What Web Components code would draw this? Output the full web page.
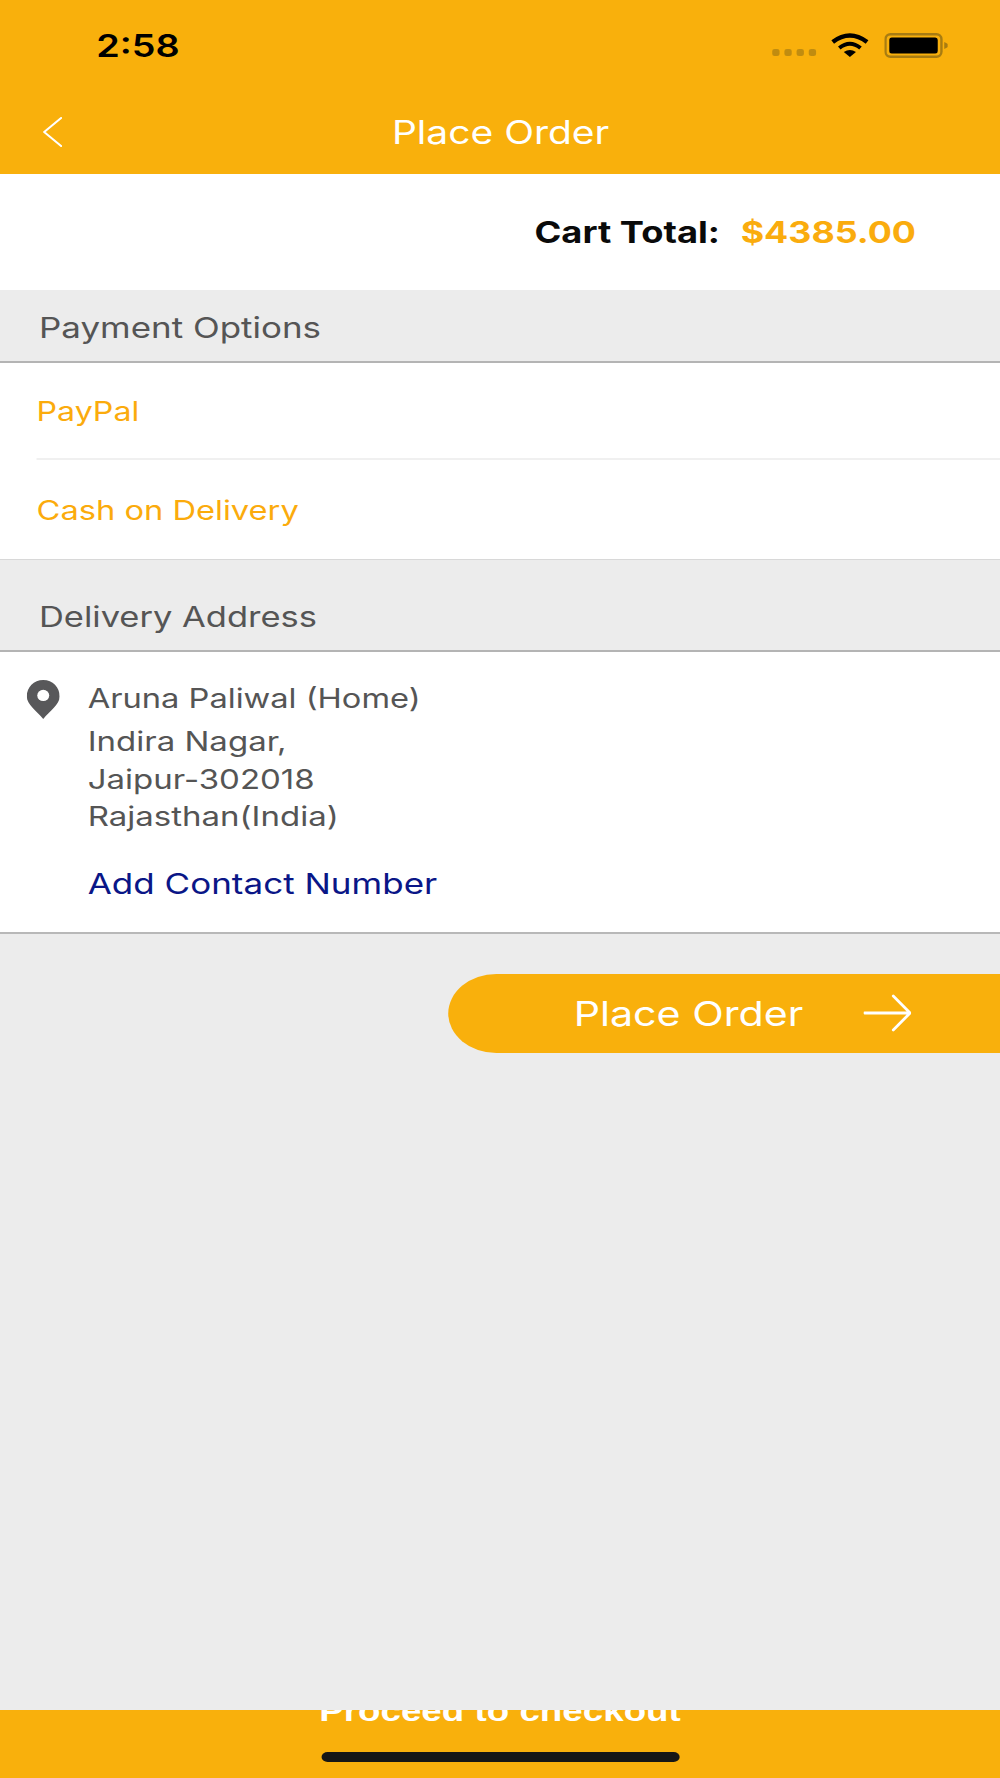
<!DOCTYPE html>
<html lang="en">
<head>
<meta charset="utf-8">
<title>Place Order</title>
<style>
    html, body { margin: 0; background: #ececec; overflow: hidden; }
</style>
</head>
<body>
<app-page>
    <app-header slot="header" title-text="Place Order"></app-header>
    <cart-total label="Cart Total:" amount="$4385.00"></cart-total>
    <section-heading>Payment Options</section-heading>
    <option-row>PayPal</option-row>
    <option-row last>Cash on Delivery</option-row>
    <section-heading second>Delivery Address</section-heading>
    <address-card>
        <span slot="name">Aruna Paliwal (Home)</span>
        <span>Indira Nagar,</span>
        <span>Jaipur-302018</span>
        <span>Rajasthan(India)</span>
        <span slot="action">Add Contact Number</span>
    </address-card>
    <place-button>Place Order</place-button>
    <bottom-bar>Proceed to checkout</bottom-bar>
</app-page>

<script>
// The screen is laid out 821px wide and stretched to 1000px, like the source capture.
const YELLOW = '#f9b00c';
const FONT = 'Inter, "Noto Sans", sans-serif';

// Base class: clones the element's markup into an open shadow root.
class ShadowElement extends HTMLElement {
    constructor() {
        super();
        const template = document.createElement('template');
        template.innerHTML = this.markup();
        this.attachShadow({ mode: 'open' }).appendChild(template.content.cloneNode(true));
    }
}

class AppPage extends ShadowElement {
    markup() {
        return `
<style>
    :host {
        display: flex;
        flex-direction: column;
        width: 821px;
        height: 1778px;
        background: #ececec;
        font-family: ${FONT};
        transform: scaleX(1.21803);
        transform-origin: 0 0;
    }
</style>
<slot name="header"></slot>
<slot></slot>`;
    }
}

class AppHeader extends ShadowElement {
    markup() {
        return `
<style>
    :host { display: block; height: 174px; background: ${YELLOW}; }
    .status { display: flex; align-items: center; height: 90px; padding: 0 43px 0 79px; }
    .time { font-size: 31px; font-weight: 600; color: #000; flex: 1; }
    .dots { display: flex; gap: 3.5px; margin: 15px 12px 0 0; }
    .dots i { width: 6.5px; height: 7px; border-radius: 2px; background: #c08c10; }
    .wifi { display: block; width: 31.5px; height: 24px; margin-right: 12px; }
    .battery { display: block; width: 52.5px; height: 25px; }
    .nav { position: relative; display: flex; align-items: center; justify-content: center; height: 84px; }
    .back { position: absolute; left: 35px; top: 27px; display: block; width: 16px; height: 30px; }
    .title { font-size: 32px; color: #fff; margin-left: 1px; }
</style>
<div class="status">
    <span class="time">2:58</span>
    <span class="dots"><i></i><i></i><i></i><i></i></span>
    <svg class="wifi" viewBox="0 0 38 24" preserveAspectRatio="none">
        <path d="M2 9 Q19 -4 36 9" fill="none" stroke="#000" stroke-width="4.4"/>
        <path d="M8.5 15 Q19 6.5 29.5 15" fill="none" stroke="#000" stroke-width="4"/>
        <path d="M13 19 Q19 15 25 19 L19 24 Z" fill="#000"/>
    </svg>
    <svg class="battery" viewBox="0 0 64 25" preserveAspectRatio="none">
        <rect x="1.2" y="1.2" width="56" height="22.6" rx="5" fill="none" stroke="#a87c12" stroke-width="2.4"/>
        <rect x="5" y="4.5" width="48.5" height="16" rx="2.5" fill="#000"/>
        <path d="M60 9 L64 11 V14 L60 16 Z" fill="#a87c12"/>
    </svg>
</div>
<div class="nav">
    <svg class="back" viewBox="0 0 19 30" preserveAspectRatio="none">
        <path d="M18 1 L1.5 15 L18 29" fill="none" stroke="#fff" stroke-width="2" stroke-linecap="round" stroke-linejoin="round"/>
    </svg>
    <span class="title"></span>
</div>`;
    }
    connectedCallback() {
        this.shadowRoot.querySelector('.title').textContent = this.getAttribute('title-text');
    }
}

class CartTotal extends ShadowElement {
    markup() {
        return `
<style>
    :host {
        display: flex;
        align-items: center;
        justify-content: flex-end;
        gap: 17px;
        height: 116px;
        padding-right: 69px;
        background: #fff;
        font-weight: 700;
    }
    .label { color: #0a0a0a; font-size: 29.8px; }
    .amount { color: #faac0e; font-size: 29.4px; }
</style>
<span class="label"></span>
<span class="amount"></span>`;
    }
    connectedCallback() {
        this.shadowRoot.querySelector('.label').textContent = this.getAttribute('label');
        this.shadowRoot.querySelector('.amount').textContent = this.getAttribute('amount');
    }
}

class SectionHeading extends ShadowElement {
    markup() {
        return `
<style>
    :host {
        display: flex;
        align-items: flex-end;
        height: 73px;
        padding: 0 0 13px 32px;
        box-sizing: border-box;
        border-bottom: 2px solid #b4b4b4;
        color: #555;
        font-size: 28.7px;
        line-height: 40px;
    }
    :host([second]) { height: 93px; border-top: 1px solid #d8d8d8; font-size: 28.3px; }
</style>
<slot></slot>`;
    }
}

class OptionRow extends ShadowElement {
    markup() {
        return `
<style>
    :host { display: block; background: #fff; color: #fbab0c; font-size: 26.4px; }
    .text { display: flex; align-items: center; height: 95px; padding-left: 30px; }
    .rule { height: 2px; margin-left: 29.5px; background: #f0f0f0; }
    :host([last]) { font-size: 26.8px; }
    :host([last]) .text { height: 99px; }
    :host([last]) .rule { display: none; }
</style>
<div class="text"><slot></slot></div>
<div class="rule"></div>`;
    }
}

class AddressCard extends ShadowElement {
    markup() {
        return `
<style>
    :host {
        display: flex;
        gap: 23px;
        padding: 27px 0 29px 22px;
        background: #fff;
        border-bottom: 2px solid #b8b8b8;
        color: #555;
        font-size: 26.8px;
        line-height: 38px;
    }
    .pin { display: block; flex: none; width: 27px; height: 39px; margin-top: 1px; }
    .body { display: flex; flex-direction: column; }
    .lines { display: flex; flex-direction: column; margin-top: 6px; font-size: 27.1px; line-height: 37.5px; }
    .action { margin-top: 29px; color: #0a1687; font-size: 28.75px; }
</style>
<svg class="pin" viewBox="0 0 33 38" preserveAspectRatio="none">
    <path d="M16.5 0 C7 0 0 7 0 16 C0 24 10 30 16.5 38 C23 30 33 24 33 16 C33 7 26 0 16.5 0 Z" fill="#58585a"/>
    <ellipse cx="16.5" cy="15" rx="6" ry="5.5" fill="#fff"/>
</svg>
<div class="body">
    <slot name="name"></slot>
    <div class="lines"><slot></slot></div>
    <div class="action"><slot name="action"></slot></div>
</div>`;
    }
}

class PlaceButton extends ShadowElement {
    markup() {
        return `
<style>
    :host {
        display: flex;
        align-items: center;
        align-self: flex-end;
        box-sizing: border-box;
        width: 453px;
        height: 79px;
        margin: 40px 0 0 368px;
        padding-left: 103px;
        background: ${YELLOW};
        border-radius: 39.5px 0 0 39.5px;
        color: #fff;
        font-size: 33.8px;
    }
    .arrow { display: block; width: 39px; height: 38px; margin-left: 49.6px; }
</style>
<slot></slot>
<svg class="arrow" viewBox="0 0 48 38" preserveAspectRatio="none">
    <path d="M1 19 H46 M30 2 L47 19 L30 36" fill="none" stroke="#fff" stroke-width="2.8" stroke-linecap="round" stroke-linejoin="round"/>
</svg>`;
    }
}

class BottomBar extends ShadowElement {
    markup() {
        return `
<style>
    :host {
        display: flex;
        flex-direction: column;
        align-items: center;
        height: 68px;
        margin-top: auto;
        background: ${YELLOW};
        overflow: hidden;
    }
    .label {
        margin-top: -13.7px;
        color: #fff;
        font: 700 30.2px/30px "Liberation Sans", Arial, sans-serif;
        white-space: nowrap;
    }
    .home { width: 294px; height: 10px; margin-top: 25.7px; border-radius: 5px; background: #161616; }
</style>
<div class="label"><slot></slot></div>
<div class="home"></div>`;
    }
}

customElements.define('app-page', AppPage);
customElements.define('app-header', AppHeader);
customElements.define('cart-total', CartTotal);
customElements.define('section-heading', SectionHeading);
customElements.define('option-row', OptionRow);
customElements.define('address-card', AddressCard);
customElements.define('place-button', PlaceButton);
customElements.define('bottom-bar', BottomBar);
</script>
</body>
</html>
